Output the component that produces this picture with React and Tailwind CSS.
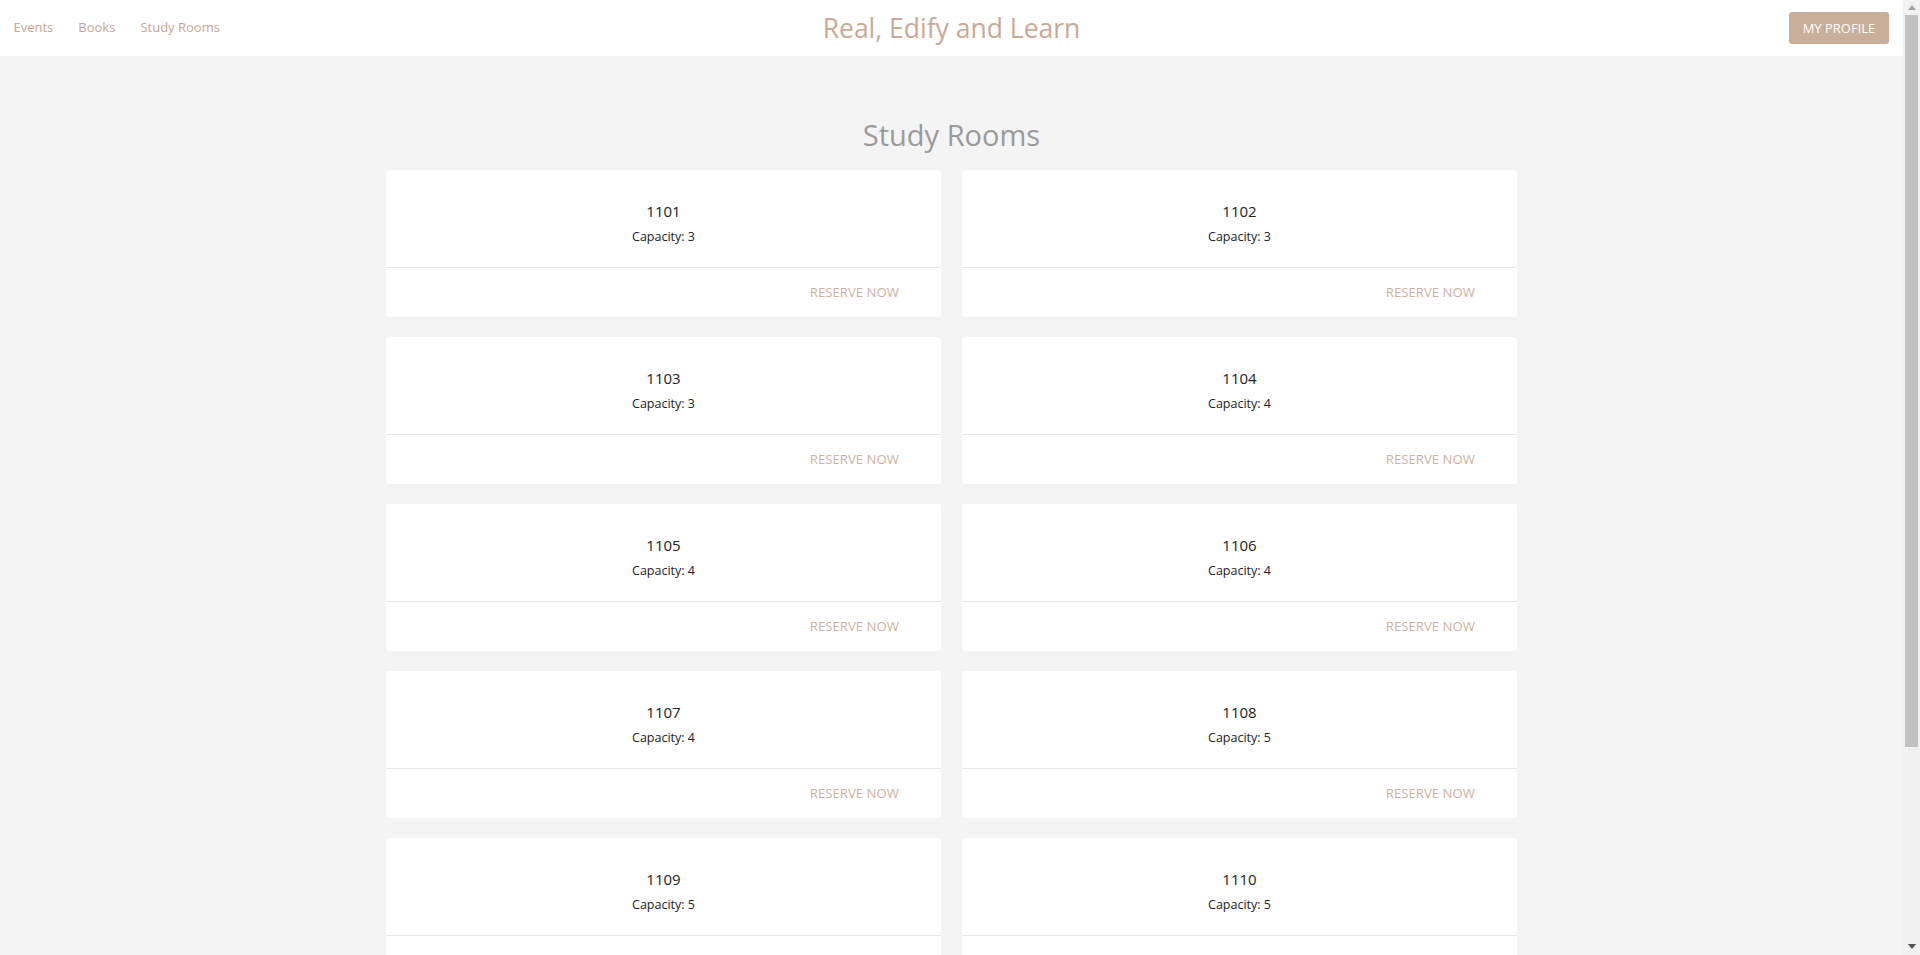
import React from "react";

const rooms = [
  ["1101", 3], ["1102", 3], ["1103", 3], ["1104", 4], ["1105", 4],
  ["1106", 4], ["1107", 4], ["1108", 5], ["1109", 5], ["1110", 5],
  ["1111", 5], ["1112", 6],
];

const font = { fontFamily: '"Open Sans", "Noto Sans", sans-serif' };

function Card({ name, cap }) {
  return (
    <div className="bg-white rounded-[3px] flex flex-col h-[147px]">
      <div className="h-[97px] flex flex-col items-center pt-[31px]">
        <div className="text-[15px] leading-[20px] text-[#222]">{name}</div>
        <div className="text-[12.5px] leading-[18px] text-[#222] mt-[7px]">Capacity: {cap}</div>
      </div>
      <div className="border-t border-[#e6e6e6] flex-1 flex items-center justify-end pr-[42px] pt-[1px]">
        <span className="text-[13.2px] uppercase text-[#cfb19d]">Reserve Now</span>
      </div>
    </div>
  );
}

export default function App() {
  return (
    <div className="flex w-[1920px] h-[955px] overflow-hidden bg-[#f4f4f4]" style={font}>
      <div className="flex-1 flex flex-col min-w-0">
        <header className="h-[56px] bg-white grid grid-cols-[1fr_auto_1fr] items-center shrink-0">
          <nav className="flex items-center pl-[1px] -mt-[1px] text-[13px] text-[#c9a690]">
            <span className="px-[12.5px]">Events</span>
            <span className="px-[12.5px]">Books</span>
            <span className="px-[12.5px]">Study Rooms</span>
          </nav>
          <div className="text-[26.5px] leading-[36px] text-[#cba994] -mt-[1px]">Real, Edify and Learn</div>
          <div className="flex justify-end pr-[14px]">
            <div className="w-[100px] h-[32px] rounded-[3px] bg-[#c9ae99] text-white text-[13px] flex items-center justify-center uppercase pt-[1px]">
              My Profile
            </div>
          </div>
        </header>
        <main className="flex flex-col items-center pt-[60px]">
          <h1 className="text-[29px] leading-[38px] text-[#9b9b9b] mb-[16px]">Study Rooms</h1>
          <div className="w-[1131px] grid grid-cols-2 gap-x-[21px] gap-y-[20px]">
            {rooms.map(([n, c]) => (
              <Card key={n} name={n} cap={c} />
            ))}
          </div>
        </main>
      </div>
      <div className="w-[17px] h-full bg-[#f1f1f1] flex flex-col shrink-0">
        <div className="h-[15px] flex items-center justify-center">
          <svg width="8" height="5" viewBox="0 0 8 5"><path d="M0 5 L4 0 L8 5 Z" fill="#a3a3a3" /></svg>
        </div>
        <div className="mx-[2px] h-[732px] bg-[#c1c1c1]" />
        <div className="flex-1" />
        <div className="h-[17px] flex items-center justify-center">
          <svg width="8" height="5" viewBox="0 0 8 5"><path d="M0 0 L8 0 L4 5 Z" fill="#505050" /></svg>
        </div>
      </div>
    </div>
  );
}
